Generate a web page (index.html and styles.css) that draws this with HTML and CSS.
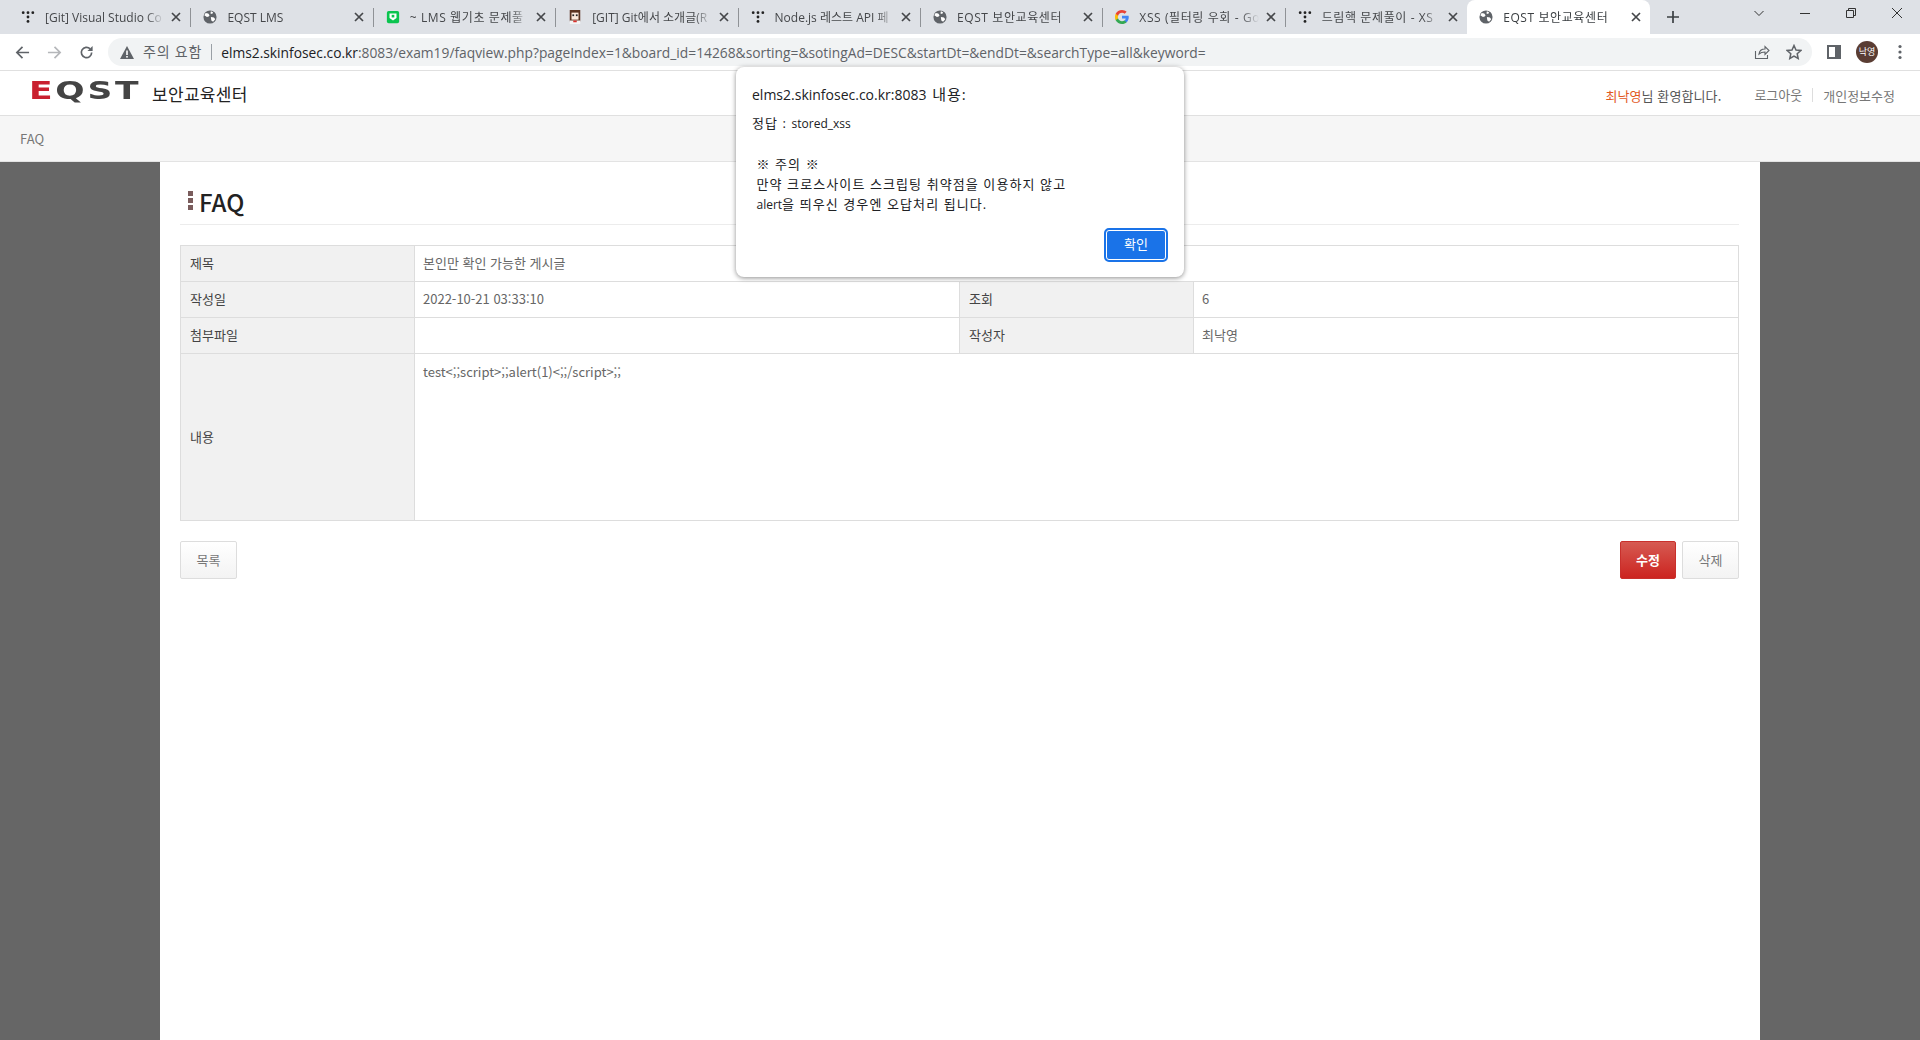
FILE: index.html
```html
<!DOCTYPE html>
<html lang="ko">
    <head>
        <meta charset="UTF-8" />
        <title>EQST 보안교육센터</title>
        <link rel="stylesheet" href="styles.css">
    </head>
    <body>
        <svg class="defs" width="0" height="0">
            <symbol id="dots" viewBox="0 0 16 16">
                <circle cx="2.5" cy="3" r="1.6" fill="#222"/>
                <circle cx="8" cy="3" r="1.6" fill="#222"/>
                <circle cx="13.5" cy="3" r="1.6" fill="#222"/>
                <circle cx="8" cy="8" r="1.6" fill="#222"/>
                <circle cx="8" cy="13" r="1.6" fill="#222"/>
            </symbol>
            <symbol id="globe" viewBox="0 0 16 16">
                <circle cx="8" cy="8" r="7.5" fill="#5f6368"/>
                <path d="M3 3.5l3 .5 1.500 2-1 1.500-2 .5L1.500 6zM9 1.500l2.500 1-1 2-2-.5zM9 8l3.500.5 1.500 2-2.500 3-2-1.500z" fill="#fff"/>
            </symbol>
            <symbol id="close" viewBox="0 0 10 10">
                <path d="M1 1l8 8M9 1l-8 8" stroke="#45474a" stroke-width="1.700" fill="none"/>
            </symbol>
        </svg>

        <div class="tabstrip">
            <div class="tab first"><svg class="favicon"><use href="#dots"/></svg><span class="tab-title">[Git] Visual Studio Co</span><svg class="tab-close"><use href="#close"/></svg></div>
            <div class="tab"><svg class="favicon"><use href="#globe"/></svg><span class="tab-title">EQST LMS</span><svg class="tab-close"><use href="#close"/></svg></div>
            <div class="tab">
                <svg class="favicon" viewBox="0 0 16 16"><rect x="1" y="1" width="14" height="14" rx="2" fill="#0bc44f"/><path d="M4 4h8v5l-4 3-4-3z" fill="#fff"/><rect x="6.500" y="5.500" width="3" height="3" fill="#0bc44f"/></svg>
                <span class="tab-title ko">~ LMS 웹기초 문제풀</span><svg class="tab-close"><use href="#close"/></svg>
            </div>
            <div class="tab">
                <svg class="favicon" viewBox="0 0 16 16"><rect x="2" y="0" width="12" height="13" fill="#5b3320"/><rect x="4" y="3" width="8" height="8" fill="#fbe9dc"/><rect x="5" y="5" width="2" height="2" fill="#222"/><rect x="9" y="5" width="2" height="2" fill="#222"/><rect x="2" y="12" width="12" height="4" fill="#f4f4f4"/><rect x="6" y="12" width="4" height="2" fill="#d9302c"/></svg>
                <span class="tab-title">[GIT] Git에서 소개글(R</span><svg class="tab-close"><use href="#close"/></svg>
            </div>
            <div class="tab"><svg class="favicon"><use href="#dots"/></svg><span class="tab-title">Node.js 레스트 API 페</span><svg class="tab-close"><use href="#close"/></svg></div>
            <div class="tab"><svg class="favicon"><use href="#globe"/></svg><span class="tab-title ko">EQST 보안교육센터</span><svg class="tab-close"><use href="#close"/></svg></div>
            <div class="tab">
                <svg class="favicon" viewBox="0 0 16 16"><path d="M15.700 8.200c0-.6-.1-1.100-.2-1.600H8v3h4.300c-.2 1-.7 1.800-1.600 2.400v2h2.600c1.500-1.400 2.400-3.400 2.400-5.800z" fill="#4285f4"/><path d="M8 16c2.200 0 4-.7 5.300-2l-2.600-2c-.7.500-1.600.8-2.700.8-2.100 0-3.900-1.400-4.500-3.300H.8v2.100C2.100 14.200 4.900 16 8 16z" fill="#34a853"/><path d="M3.500 9.500c-.3-1-.3-2 0-3V4.400H.8c-1.100 2.200-1.100 5 0 7.200z" fill="#fbbc05"/><path d="M8 3.200c1.200 0 2.200.4 3 1.200l2.300-2.300C11.900.8 10.100 0 8 0 4.900 0 2.100 1.800.8 4.400l2.700 2.100C4.100 4.600 5.900 3.200 8 3.200z" fill="#ea4335"/></svg>
                <span class="tab-title ko">XSS (필터링 우회 - Go</span><svg class="tab-close"><use href="#close"/></svg>
            </div>
            <div class="tab"><svg class="favicon"><use href="#dots"/></svg><span class="tab-title ko">드림핵 문제풀이 - XS</span><svg class="tab-close"><use href="#close"/></svg></div>
            <div class="tab active"><svg class="favicon"><use href="#globe"/></svg><span class="tab-title ko">EQST 보안교육센터</span><svg class="tab-close"><use href="#close"/></svg></div>
            <svg class="new-tab" viewBox="0 0 12 12"><path d="M6 0v12M0 6h12" stroke="#3c4043" stroke-width="1.700"/></svg>
            <div class="window-controls">
                <svg viewBox="0 0 12 12"><path d="M1.500 4l4.500 4.500L10.500 4" stroke="#333" fill="none"/></svg>
                <svg viewBox="0 0 12 12"><path d="M1 6.500h10" stroke="#333"/></svg>
                <svg viewBox="0 0 12 12"><path d="M1.500 3.500h7v7h-7zM3.500 3.500v-2h7v7h-2" stroke="#333" fill="none"/></svg>
                <svg viewBox="0 0 12 12"><path d="M1 1l10 10M11 1L1 11" stroke="#333" fill="none"/></svg>
            </div>
        </div>

        <div class="toolbar">
            <svg class="nav-icon" viewBox="0 0 16 16"><path d="M15 8H2M8 2L2 8l6 6" stroke="#5f6368" stroke-width="1.800" fill="none"/></svg>
            <svg class="nav-icon" viewBox="0 0 16 16"><path d="M1 8h13M8 2l6 6-6 6" stroke="#b5b7ba" stroke-width="1.800" fill="none"/></svg>
            <svg class="nav-icon" viewBox="0 0 16 16"><path d="M13.500 8a5.500 5.500 0 1 1-1.600-3.900" stroke="#5f6368" stroke-width="1.800" fill="none"/><path d="M14.500 1v5.500H9z" fill="#5f6368"/></svg>
            <div class="omnibox">
                <svg class="warn" viewBox="0 0 14 13"><path d="M7 0l7 13H0z" fill="#5f6368"/><rect x="6.200" y="4.500" width="1.600" height="4.500" fill="#fff"/><rect x="6.200" y="10" width="1.600" height="1.600" fill="#fff"/></svg>
                <span class="warn-text">주의 요함</span>
                <span class="url"><span class="host">elms2.skinfosec.co.kr</span>:8083/exam19/faqview.php?pageIndex=1&amp;board_id=14268&amp;sorting=&amp;sotingAd=DESC&amp;startDt=&amp;endDt=&amp;searchType=all&amp;keyword=</span>
                <svg class="omni-icon" viewBox="0 0 16 16"><path d="M1.500 7v7.500h12V11M5 10c.5-3.500 3-5 6-5V2.500L15 6.500l-4 4V8c-2.500 0-4.500.5-6 2z" stroke="#5f6368" stroke-width="1.100" fill="none"/></svg>
                <svg class="omni-icon star" viewBox="0 0 16 16"><path d="M8 1.500l2 4.500 4.800.5-3.600 3.200 1 4.800L8 12.100l-4.200 2.400 1-4.800L1.200 6.500 6 6z" stroke="#5f6368" stroke-width="1.500" fill="none"/></svg>
            </div>
            <svg class="panel-icon" viewBox="0 0 14 14"><path d="M1 1h12v12H1z" stroke="#5f6368" stroke-width="2" fill="none"/><rect x="8" y="1" width="5" height="12" fill="#5f6368"/></svg>
            <span class="avatar">낙영</span>
            <svg class="menu-icon" viewBox="0 0 4 16"><circle cx="2" cy="2.500" r="1.600" fill="#5f6368"/><circle cx="2" cy="8" r="1.600" fill="#5f6368"/><circle cx="2" cy="13.500" r="1.600" fill="#5f6368"/></svg>
        </div>

        <div class="site-header">
            <div class="logo"><span class="logo-mark"><span class="logo-e">E</span>QST</span><span class="logo-name">보안교육센터</span></div>
            <div class="user-menu">
                <span class="welcome"><span class="user-name">최낙영</span>님 환영합니다.</span>
                <a class="logout">로그아웃</a>
                <a class="profile">개인정보수정</a>
            </div>
        </div>
        <div class="site-nav">FAQ</div>

        <div class="page">
            <div class="content">
                <h2 class="page-title"><span class="title-mark"><i></i><i></i><i></i></span>FAQ</h2>
                <table class="view-table">
                    <colgroup>
                        <col class="col-th"><col class="col-td"><col class="col-th"><col>
                    </colgroup>
                    <tr><th>제목</th><td colspan="3">본인만 확인 가능한 게시글</td></tr>
                    <tr><th>작성일</th><td>2022-10-21 03:33:10</td><th>조회</th><td>6</td></tr>
                    <tr><th>첨부파일</th><td></td><th>작성자</th><td>최낙영</td></tr>
                    <tr class="body-row"><th>내용</th><td colspan="3">test&lt;;;script&gt;;;alert(1)&lt;;;/script&gt;;;</td></tr>
                </table>
                <div class="buttons">
                    <a class="btn">목록</a>
                    <div class="buttons-right">
                        <a class="btn btn-red">수정</a>
                        <a class="btn">삭제</a>
                    </div>
                </div>
            </div>
        </div>

        <div class="alert">
            <div class="alert-title">elms2.skinfosec.co.kr:8083 <span class="alert-title-ko">내용:</span></div>
            <div class="alert-text">정답 : <span class="latin">stored_xss</span>

 ※ 주의 ※
 만약 크로스사이트 스크립팅 취약점을 이용하지 않고
 <span class="latin">alert</span>을 띄우신 경우엔 오답처리 됩니다.</div>
            <div class="alert-actions"><button class="alert-ok">확인</button></div>
        </div>
    </body>
</html>
```

FILE: styles.css
```css
* {
    box-sizing: border-box;
}
html, body {
    height: 100%;
}
body {
    display: flex;
    flex-direction: column;
    height: 1040px;
    margin: 0;
    overflow: hidden;
    background-color: #fff;
    font-family: "Noto Sans CJK KR", "Noto Sans", sans-serif;
    font-size: 13px;
    color: #666;
}
.defs {
    position: absolute;
}

/* browser tabs */
.tabstrip {
    display: flex;
    align-items: center;
    flex: none;
    height: 34px;
    padding-left: 8px;
    background-color: #dee1e6;
}
.tab {
    display: flex;
    align-items: center;
    flex: none;
    position: relative;
    width: 182.4px;
    height: 34px;
    padding: 0 9px 0 13px;
    color: #45474a;
    font-family: "Open Sans", "Noto Sans CJK KR", sans-serif;
    font-size: 12px;
}
.tab::after {
    content: "";
    position: absolute;
    right: -1px;
    top: 8px;
    width: 1px;
    height: 19px;
    background-color: #8f9296;
}
.tab.active::after {
    display: none;
}
.tab.active {
    height: 34px;
    background-color: #fff;
    border-radius: 8px 8px 0 0;
    color: #3c4043;
    padding-left: 12px;
}
.favicon {
    flex: none;
    width: 14px;
    height: 14px;
    margin-right: 10px;
}
.tab-title {
    flex: 1;
    overflow: hidden;
    white-space: nowrap;
    -webkit-mask-image: linear-gradient(to right, #000 85%, transparent 100%);
    mask-image: linear-gradient(to right, #000 85%, transparent 100%);
}
.tab-title.ko {
    letter-spacing: 0.6px;
}
.tab-close {
    flex: none;
    width: 10px;
    height: 10px;
    margin-left: 7px;
}
.new-tab {
    flex: none;
    width: 12px;
    height: 12px;
    margin-left: 17px;
}
.window-controls {
    display: flex;
    gap: 34px;
    margin-left: auto;
    padding: 0 17px 8px 0;
}
.window-controls svg {
    width: 12px;
    height: 12px;
}

/* address bar */
.toolbar {
    display: flex;
    align-items: center;
    flex: none;
    height: 36px;
    padding-left: 15px;
    background-color: #fff;
}
.nav-icon {
    flex: none;
    width: 15px;
    height: 15px;
    margin-right: 17px;
}
.omnibox {
    display: flex;
    align-items: center;
    flex: none;
    width: 1704px;
    height: 28px;
    margin-left: -3px;
    padding: 0 10px 0 12px;
    background-color: #f1f3f4;
    border-radius: 14px;
    font-family: "Open Sans", "Noto Sans CJK KR", sans-serif;
    font-size: 13.8px;
    color: #5f6368;
}
.warn {
    flex: none;
    width: 14px;
    height: 13px;
    margin-right: 9px;
}
.warn-text {
    padding-right: 9px;
    border-right: 1px solid #9aa0a6;
    font-size: 14px;
    letter-spacing: 0.8px;
    line-height: 16px;
}
.url {
    flex: 1;
    margin-left: 9px;
    white-space: nowrap;
}
.host {
    color: #202124;
}
.omni-icon {
    flex: none;
    width: 16px;
    height: 16px;
}
.omni-icon.star {
    margin-left: 16px;
}
.panel-icon {
    flex: none;
    width: 14px;
    height: 14px;
    margin-left: 15px;
}
.avatar {
    flex: none;
    width: 22px;
    height: 22px;
    margin-left: 15px;
    border-radius: 50%;
    background-color: #5a3d33;
    color: #fff;
    font-size: 9px;
    line-height: 22px;
    text-align: center;
}
.menu-icon {
    flex: none;
    width: 4px;
    height: 16px;
    margin-left: 20px;
}

/* site header */
.site-header {
    display: flex;
    justify-content: space-between;
    flex: none;
    height: 46px;
    padding: 0 25px 0 29px;
    border-top: 1px solid #e0e0e0;
    border-bottom: 1px solid #e0e0e0;
}
.logo {
    display: flex;
    align-items: center;
}
.logo-mark {
    width: 110px;
    margin-right: 13px;
    padding-bottom: 5px;
    color: #444;
    font-family: "DejaVu Sans", sans-serif;
    font-size: 25px;
    font-weight: bold;
    letter-spacing: 2px;
    line-height: 26px;
    white-space: nowrap;
    transform: scale(1.38, 1);
    transform-origin: left center;
}
.logo-e {
    color: #c9202f;
}
.logo-name {
    color: #222;
    font-size: 17px;
    letter-spacing: 0.3px;
}
.user-menu {
    display: flex;
    align-items: center;
    padding-top: 4px;
}
.welcome {
    margin-right: 33px;
    color: #555;
    letter-spacing: 0.1px;
}
.user-name {
    color: #e2591f;
}
.user-menu a {
    color: #777;
}
.logout {
    padding-right: 10px;
    margin-right: 10px;
    border-right: 1px solid #ddd;
    line-height: 14px;
}

.site-nav {
    flex: none;
    height: 46px;
    padding-left: 20px;
    background-color: #f6f6f6;
    border-bottom: 1px solid #e3e3e3;
    color: #777;
    font-size: 13px;
    line-height: 45px;
}

/* page */
.page {
    flex: 1;
    background-color: #666;
    padding: 0 160px;
}
.content {
    height: 100%;
    padding: 0 21px 0 20px;
    background-color: #fff;
}
.page-title {
    display: flex;
    align-items: center;
    height: 63px;
    margin: 0 0 20px 0;
    padding: 17px 0 0 8px;
    border-bottom: 1px solid #ececec;
    color: #222;
    font-size: 24px;
    font-weight: 500;
}
.title-mark {
    display: flex;
    flex-direction: column;
    gap: 2px;
    margin: -3px 6px 0 0;
}
.title-mark i {
    display: block;
    width: 5px;
    height: 5px;
    background-color: #7a5c5c;
}
.view-table {
    width: 1559px;
    border-collapse: collapse;
    table-layout: fixed;
}
.col-th {
    width: 234px;
}
.col-td {
    width: 545px;
}
.view-table th,
.view-table td {
    height: 36px;
    padding: 0 8px 2px;
    border: 1px solid #ddd;
    font-size: 13px;
    font-weight: normal;
    text-align: left;
}
.view-table th {
    padding-left: 9px;
    background-color: #f1f1f1;
    color: #444;
}
.view-table td {
    color: #666;
}
.body-row th,
.body-row td {
    height: 167px;
}
.body-row td {
    padding-top: 8px;
    vertical-align: top;
}
.buttons {
    display: flex;
    justify-content: space-between;
    margin-top: 20px;
}
.buttons-right {
    display: flex;
    gap: 6px;
}
.btn {
    display: block;
    width: 57px;
    height: 38px;
    border: 1px solid #ddd;
    border-radius: 2px;
    background: linear-gradient(#fff, #f3f3f3);
    color: #777;
    font-size: 13px;
    line-height: 36px;
    text-align: center;
}
.btn-red {
    width: 56px;
    border-color: #c9302c;
    background: linear-gradient(#d65a52, #cc2420);
    color: #fff;
    font-weight: bold;
}

/* javascript alert */
.alert {
    position: absolute;
    left: 736px;
    top: 67px;
    width: 448px;
    height: 210px;
    padding: 17px 16px 15px;
    background-color: #fff;
    border-radius: 8px;
    box-shadow: 0 1px 5px rgba(0, 0, 0, 0.45);
    font-family: "Open Sans", "Noto Sans CJK KR", sans-serif;
    color: #202124;
}
.alert-title {
    font-size: 14px;
    line-height: 20px;
}
.alert-title-ko {
    font-size: 15px;
    letter-spacing: 1px;
    margin-left: 2px;
}
.alert-text {
    margin-top: 8px;
    font-size: 13px;
    letter-spacing: 1.1px;
    line-height: 20px;
    white-space: pre-wrap;
}
.latin {
    font-size: 12px;
    letter-spacing: 0;
}
.alert-actions {
    display: flex;
    justify-content: flex-end;
    position: absolute;
    right: 16px;
    bottom: 15px;
}
.alert-ok {
    width: 64px;
    height: 34px;
    padding-bottom: 4px;
    border: 2px solid #1a73e8;
    outline: 1px solid #fff;
    outline-offset: -3px;
    border-radius: 5px;
    background-color: #1a73e8;
    color: #fff;
    font-family: "Noto Sans CJK KR", sans-serif;
    font-size: 13px;
}
```
